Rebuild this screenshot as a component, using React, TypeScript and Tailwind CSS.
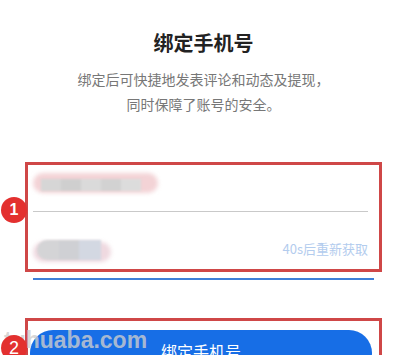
import React from "react";

function Blur1() {
  return (
    <div className="relative h-[20px] w-[125px]">
      <div className="absolute left-0 top-0 h-[20px] w-[125px] rounded-full bg-[#f3d3d6] blur-[2px]" />
      <div className="absolute left-[8px] top-[6px] flex h-[12px] blur-[1px]">
        <div className="w-[20px] bg-[#d6d6d6]" />
        <div className="w-[20px] bg-[#cfcfcf]" />
        <div className="w-[20px] bg-[#dadada]" />
        <div className="w-[20px] bg-[#d2d2d2]" />
        <div className="w-[20px] bg-[#dcdcdc]" />
      </div>
    </div>
  );
}

function Blur2() {
  return (
    <div className="relative h-[26px] w-[80px]">
      <div className="absolute left-0 top-[4px] h-[20px] w-[78px] rounded-full bg-[#efd9e0] blur-[2px]" />
      <div className="absolute left-[4px] top-[2px] flex h-[20px] blur-[1px]">
        <div className="w-[22px] rounded-l-full bg-[#d4d4d6]" />
        <div className="w-[20px] bg-[#cfd0d4]" />
        <div className="w-[22px] bg-[#d3d8e2]" />
      </div>
    </div>
  );
}

export default function App() {
  return (
    <div
      className="relative h-[355px] w-[407px] overflow-hidden bg-white pt-[29px]"
      style={{ fontFamily: '"Noto Sans CJK SC", "Noto Sans", sans-serif' }}
    >
      <div className="text-center text-[20px] font-bold leading-[28px] text-[#222]">绑定手机号</div>
      <div className="mt-[10px] text-center text-[14px] leading-[25px] text-[#777]">
        <div>绑定后可快捷地发表评论和动态及提现，</div>
        <div>同时保障了账号的安全。</div>
      </div>

      <div className="mx-[25px] mt-[45px] flex h-[110px] flex-col border-[3px] border-[#cf4747] pl-[5px] pr-[11px]">
        <div className="flex h-[46px] items-start pt-[8px]">
          <Blur1 />
        </div>
        <div className="h-px bg-[#c9c9c9]" />
        <div className="flex h-[57px] items-start justify-between pt-[26px]">
          <Blur2 />
          <div className="mt-[-2px] text-[13px] leading-[26px] text-[#b3ccee]">40s后重新获取</div>
        </div>
      </div>

      <div className="mx-[33px] mt-[6px] h-[2px] bg-[#3d7fd8]" />

      <div className="mx-[25px] mt-[38px] border-[3px] border-b-0 border-[#cf4747] pl-[2px] pr-[7px] pt-[9px]">
        <div className="flex h-[46px] items-start justify-center rounded-[23px] bg-[#176ee6] pt-[10px] text-[16px] leading-[22px] text-white">
          绑定手机号
        </div>
      </div>

      <div
        className="absolute left-[4px] top-[327px] text-[23px] font-bold leading-[26px] text-[rgba(205,205,205,0.8)]"
        style={{ fontFamily: '"Liberation Sans", Arial, sans-serif' }}
      >
        tuhuaba.com
      </div>

      <div className="absolute left-[1px] top-[197px] flex h-[26px] w-[26px] items-center justify-center rounded-full bg-[#e3302f] text-[16px] font-bold text-white" style={{ fontFamily: '"Liberation Sans", Arial, sans-serif' }}>
        1
      </div>
      <div className="absolute left-[1px] top-[335px] flex h-[26px] w-[26px] items-center justify-center rounded-full bg-[#e3302f] text-[18px] text-white" style={{ fontFamily: '"Liberation Sans", Arial, sans-serif' }}>
        2
      </div>
    </div>
  );
}
